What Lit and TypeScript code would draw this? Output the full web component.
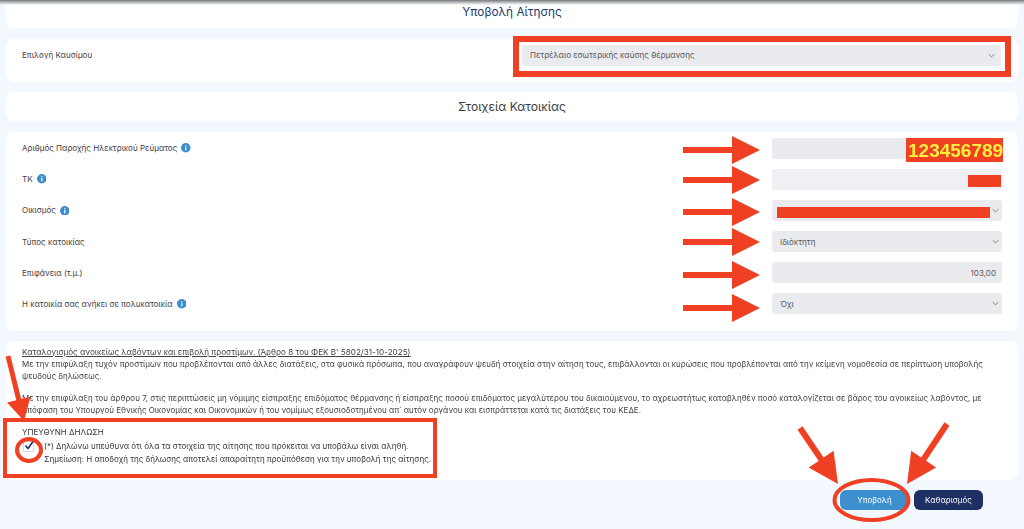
import { LitElement, html, css, svg } from "lit";
import { customElement } from "lit/decorators.js";

const chevron = html`<svg class="chev" viewBox="0 0 10 6" width="7" height="5"><path d="M1 1l4 4 4-4" fill="none" stroke="#666" stroke-width="1.1"/></svg>`;
const info = html`<svg class="info" viewBox="0 0 10 10" width="9.5" height="9.5"><circle cx="5" cy="5" r="5" fill="#3b8dcb"/><rect x="4.4" y="4.3" width="1.3" height="3.4" fill="#fff"/><rect x="4.4" y="2.4" width="1.3" height="1.2" fill="#fff"/></svg>`;

const rows = [
  { label: "Αριθμός Παροχής Ηλεκτρικού Ρεύματος", info: true, kind: "input", light: false, value: "" },
  { label: "ΤΚ", info: true, kind: "input", light: true, value: "" },
  { label: "Οικισμός", info: true, kind: "select", light: false, value: "" },
  { label: "Τύπος κατοικίας", info: false, kind: "select", light: false, value: "Ιδιόκτητη" },
  { label: "Επιφάνεια (τ.μ.)", info: false, kind: "input", light: false, value: "103,00" },
  { label: "Η κατοικία σας ανήκει σε πολυκατοικία", info: true, kind: "select", light: false, value: "Όχι" },
];

const RED = "#ef4023";
const hArrow = (cy: number) =>
  svg`<path d="M683 ${cy - 3}H732V${cy - 14}L760 ${cy}L732 ${cy + 14}V${cy + 3}H683Z" fill="${RED}"/>`;

function arrow(x1: number, y1: number, x2: number, y2: number, w = 6, hl = 28, hw = 15) {
  const d = Math.hypot(x2 - x1, y2 - y1);
  const ux = (x2 - x1) / d, uy = (y2 - y1) / d;
  const nx = -uy, ny = ux;
  const bx = x2 - ux * hl, by = y2 - uy * hl;
  const p = [
    [x1 + nx * w / 2, y1 + ny * w / 2],
    [bx + nx * w / 2, by + ny * w / 2],
    [bx + nx * hw, by + ny * hw],
    [x2, y2],
    [bx - nx * hw, by - ny * hw],
    [bx - nx * w / 2, by - ny * w / 2],
    [x1 - nx * w / 2, y1 - ny * w / 2],
  ];
  return svg`<polygon points="${p.map((q) => q.map((v) => v.toFixed(1)).join(",")).join(" ")}" fill="${RED}"/>`;
}

@customElement("app-root")
export class AppRoot extends LitElement {
  static styles = css`
    :host {
      display: block;
      position: relative;
      width: 1024px;
      height: 529px;
      overflow: hidden;
      background: #f2f8fe;
      font-family: Inter, "Noto Sans", sans-serif;
      color: #3f4248;
      font-size: 8.05px;
    }
    .shade {
      position: absolute;
      left: 0; right: 0; top: 0;
      height: 5px;
      background: linear-gradient(#77797c, #c9cdd0 60%, rgba(242, 248, 254, 0));
    }
    main {
      display: flex;
      flex-direction: column;
      gap: 10.5px;
      padding: 0 6px;
      filter: blur(0.3px);
    }
    .card {
      background: #fff;
      border-radius: 8px;
    }
    .head {
      height: 28px;
      border-radius: 0 0 8px 8px;
      display: flex;
      justify-content: center;
      padding-top: 3.5px;
      box-sizing: border-box;
      font-size: 11.8px;
      line-height: 16px;
      color: #24396f;
    }
    .fuel {
      height: 43px;
      box-sizing: border-box;
      padding: 6px 16px 0;
      display: flex;
      justify-content: space-between;
    }
    .fuel .field { width: 479px; margin-right: 1px; padding-right: 6px; }
    .fuel .label { height: 21px; }
    .title {
      height: 29px;
      display: flex;
      align-items: center;
      justify-content: center;
      font-size: 12.1px;
      padding-bottom: 1px;
      box-sizing: border-box;
      color: #3a3d42;
    }
    .form {
      height: 199px;
      box-sizing: border-box;
      padding: 6px 16px 0;
      display: grid;
      grid-template-columns: 1fr 230px;
      grid-auto-rows: 21px;
      row-gap: 10.2px;
    }
    .label {
      display: flex;
      align-items: center;
      gap: 4px;
    }
    .field {
      height: 21px;
      box-sizing: border-box;
      border-radius: 3px;
      background: #e9ebef;
      display: flex;
      align-items: center;
      justify-content: space-between;
      padding: 0 3px 0 8px;
      color: #55585e;
    }
    .field.light { background: #eef0f3; }
    .field.num { justify-content: flex-end; padding-right: 6px; }
    .chev { margin-left: auto; }
    .decl {
      height: 139px;
      box-sizing: border-box;
      padding: 5px 16px 0;
      line-height: 12px;
    }
    .decl p { margin: 0 0 10px; white-space: nowrap; font-size: 8px; }
    .decl u { display: block; font-size: 8.12px; }
    .decl-title { color: #34373c; }
    .check-row {
      display: flex;
      gap: 10px;
      margin-top: 1.5px;
    }
    .box {
      flex: none;
      width: 11px;
      height: 11px;
      margin: 1px 0 0 1px;
      border: 1px solid #d5d8de;
      border-radius: 1px;
      box-sizing: border-box;
      position: relative;
    }
    .box svg { position: absolute; left: -1px; top: -3px; }
    .check-text { line-height: 13px; color: #34373c; font-size: 8px; }
    .actions {
      display: flex;
      justify-content: flex-end;
      gap: 5px;
      padding-right: 35px;
      margin-top: -0.5px;
    }
    button {
      all: unset;
      width: 69px;
      height: 20px;
      border-radius: 6px;
      display: flex;
      align-items: center;
      justify-content: center;
      color: #fff;
      font-size: 8px;
    }
    .primary { background: #3d8fcd; }
    .secondary { background: #1e2f63; }
    .marks {
      position: absolute;
      inset: 0;
      pointer-events: none;
    }
    .stamp {
      fill: #fff03a;
      font: bold 19px "Liberation Sans", Arial, sans-serif;
    }
  `;

  render() {
    return html`
      <main>
        <div class="card head">Υποβολή Αίτησης</div>
        <div class="card fuel">
          <div class="label">Επιλογή Καυσίμου</div>
          <div class="field">Πετρέλαιο εσωτερικής καύσης θέρμανσης ${chevron}</div>
        </div>
        <div class="card title">Στοιχεία Κατοικίας</div>
        <div class="card form">
          ${rows.map(
            (r) => html`
              <div class="label">${r.label} ${r.info ? info : ""}</div>
              <div class="field ${r.kind === "input" ? "num" : ""} ${r.light ? "light" : ""}">
                ${r.value} ${r.kind === "select" ? chevron : ""}
              </div>
            `
          )}
        </div>
        <div class="card decl">
          <p>
            <u>Καταλογισμός ανοικείως λαβόντων και επιβολή προστίμων. (Άρθρο 8 του ΦΕΚ Β' 5802/31-10-2025)</u>
            Με την επιφύλαξη τυχόν προστίμων που προβλέπονται από άλλες διατάξεις, στα φυσικά πρόσωπα, που αναγράφουν ψευδή στοιχεία στην αίτηση τους, επιβάλλονται οι κυρώσεις που προβλέπονται από την κείμενη νομοθεσία σε περίπτωση υποβολής<br />ψευδούς δηλώσεως.
          </p>
          <p>
            Με την επιφύλαξη του άρθρου 7, στις περιπτώσεις μη νόμιμης είσπραξης επιδόματος θέρμανσης ή είσπραξης ποσού επιδόματος μεγαλύτερου του δικαιούμενου, το αχρεωστήτως καταβληθέν ποσό καταλογίζεται σε βάρος του ανοικείως λαβόντος, με<br />απόφαση του Υπουργού Εθνικής Οικονομίας και Οικονομικών ή του νομίμως εξουσιοδοτημένου απ΄ αυτόν οργάνου και εισπράττεται κατά τις διατάξεις του ΚΕΔΕ.
          </p>
          <div class="decl-title">ΥΠΕΥΘΥΝΗ ΔΗΛΩΣΗ</div>
          <div class="check-row">
            <span class="box"><svg viewBox="0 0 12 12" width="12" height="12"><path d="M2.5 6.5l2.6 3L10 2.5" fill="none" stroke="#1e2f63" stroke-width="1.6"/></svg></span>
            <div class="check-text">
              (*) Δηλώνω υπεύθυνα ότι όλα τα στοιχεία της αίτησης που πρόκειται να υποβάλω είναι αληθή.<br />
              Σημείωση: Η αποδοχή της δήλωσης αποτελεί απαραίτητη προϋπόθεση για την υποβολή της αίτησης.
            </div>
          </div>
        </div>
        <div class="actions">
          <button class="primary">Υποβολή</button>
          <button class="secondary">Καθαρισμός</button>
        </div>
      </main>
      <div class="shade"></div>
      <svg class="marks" viewBox="0 0 1024 529" width="1024" height="529">
        <rect x="516" y="39" width="492" height="35" fill="none" stroke="${RED}" stroke-width="6"/>
        ${[150, 180, 212, 242, 275, 308].map(hArrow)}
        <rect x="906" y="138" width="97" height="24" fill="${RED}"/>
        <text class="stamp" x="908" y="157">123456789</text>
        <rect x="968" y="175" width="33" height="12" fill="${RED}"/>
        <rect x="777" y="207" width="213" height="11" fill="${RED}"/>
        <rect x="5" y="420" width="430" height="56" fill="none" stroke="${RED}" stroke-width="4"/>
        ${arrow(8, 356, 24, 421, 5, 22, 12)}
        <ellipse cx="29" cy="450" rx="12" ry="11" fill="none" stroke="${RED}" stroke-width="4"/>
        <ellipse cx="871.5" cy="500" rx="37" ry="20" fill="none" stroke="${RED}" stroke-width="4"/>
        ${arrow(800, 428, 838, 484, 6, 30, 15)}
        ${arrow(947, 424, 907, 484, 6, 30, 15)}
      </svg>
    `;
  }
}
